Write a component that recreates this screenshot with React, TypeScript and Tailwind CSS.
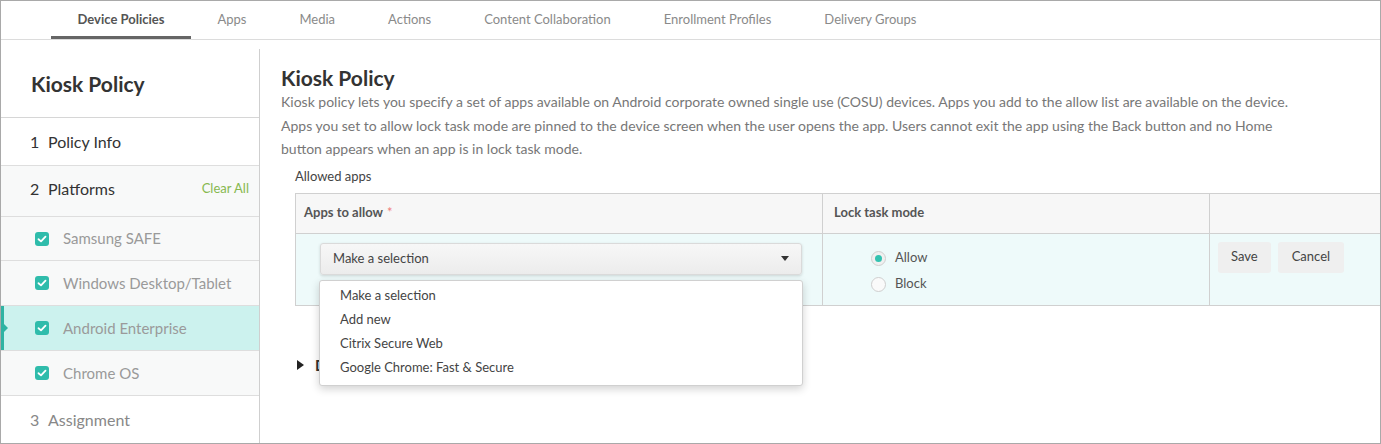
import React from "react";

const tabs = [
  "Device Policies",
  "Apps",
  "Media",
  "Actions",
  "Content Collaboration",
  "Enrollment Profiles",
  "Delivery Groups",
];

function Check() {
  return (
    <span className="w-[14px] h-[14px] rounded-[3px] bg-[#2fbcab] flex items-center justify-center shrink-0">
      <svg width="10" height="8" viewBox="0 0 10 8" fill="none">
        <path d="M1.5 4.2 L4 6.4 L8.5 1.6" stroke="white" strokeWidth="1.8" strokeLinecap="round" strokeLinejoin="round" />
      </svg>
    </span>
  );
}

function SubItem({ label, active }: { label: string; active?: boolean }) {
  return (
    <div
      className={
        "relative h-[45px] border-b border-[#dedede] flex items-center pl-[34px] gap-[14px] " +
        (active ? "bg-[#ccf2ee]" : "bg-[#f8f9f9]")
      }
    >
      {active && (
        <>
          <span className="absolute left-0 top-0 bottom-0 w-[3px] bg-[#2fb3a3]" />
          <span className="absolute left-[3px] top-1/2 -translate-y-1/2 w-0 h-0 border-y-[4px] border-y-transparent border-l-[4px] border-l-[#2fb3a3]" />
        </>
      )}
      <Check />
      <span className="text-[15px] text-[#9a9a9a]">{label}</span>
    </div>
  );
}

export default function App() {
  return (
    <div
      className="w-[1381px] h-[444px] border border-[#a9a9a9] bg-white overflow-hidden flex flex-col text-[#333]"
      style={{ fontFamily: "Lato, 'Liberation Sans', sans-serif" }}
    >
      <nav className="h-[39px] border-b border-[#dcdcdc] flex items-stretch pl-[50px] shrink-0">
        {tabs.map((t, i) => (
          <div
            key={t}
            className={
              "px-[26.5px] flex items-center text-[13px] " +
              (i === 0
                ? "font-bold text-[#555] border-b-[3px] border-[#666] pt-[3px]"
                : "text-[#8a8a8a]")
            }
          >
            {t}
          </div>
        ))}
      </nav>

      <div className="flex flex-1 min-h-0">
        <aside className="w-[259px] shrink-0 mt-[9px] border-r border-[#cfcfcf] flex flex-col">
          <div className="h-[69px] border-b border-[#d6d6d6] flex items-center pl-[30px] pt-[2px]">
            <span className="text-[21px] font-bold text-[#333]">Kiosk Policy</span>
          </div>
          <div className="h-[48px] border-b border-[#dedede] flex items-center pl-[29px] pt-[1px] text-[16px] text-[#333]">
            <span className="w-[18px]">1</span>
            <span>Policy Info</span>
          </div>
          <div className="h-[51px] border-b border-[#dedede] bg-[#f8f9f9] flex items-center pl-[29px] pr-[10px] pb-[3px] text-[16px] text-[#333]">
            <span className="w-[18px]">2</span>
            <span className="flex-1">Platforms</span>
            <span className="text-[13px] text-[#86b84f] -mt-[1px]">Clear All</span>
          </div>
          <SubItem label="Samsung SAFE" />
          <SubItem label="Windows Desktop/Tablet" />
          <SubItem label="Android Enterprise" active />
          <SubItem label="Chrome OS" />
          <div className="h-[47px] flex items-center pl-[29px] text-[16px] text-[#888]">
            <span className="w-[18px]">3</span>
            <span>Assignment</span>
          </div>
        </aside>

        <main className="flex-1 min-w-0 pl-[21px] pt-[26px]">
          <h1 className="text-[21px] leading-[24px] font-bold text-[#333]">Kiosk Policy</h1>
          <div className="text-[14px] leading-[23.5px] text-[#777] whitespace-nowrap">
            <div>
              Kiosk policy lets you specify a set of apps available on Android corporate owned single use (COSU) devices. Apps you add to the allow list are available on the device.
            </div>
            <div>
              Apps you set to allow lock task mode are pinned to the device screen when the user opens the app. Users cannot exit the app using the Back button and no Home
            </div>
            <div>button appears when an app is in lock task mode.</div>
          </div>
          <div className="pl-[14px] mt-[6px] text-[13px] leading-[18px] text-[#444]">Allowed apps</div>

          <div className="relative ml-[14px] mt-[8px] border border-[#d0d0d0] w-[1100px]">
            <div className="flex h-[40px] bg-[#f7f7f7] border-b border-[#d0d0d0] text-[13px] font-bold text-[#555]">
              <div className="w-[527px] border-r border-[#d0d0d0] flex items-center pl-[8px]">
                Apps to allow<span className="text-[#f08080] font-normal ml-[4px]">*</span>
              </div>
              <div className="w-[387px] border-r border-[#d0d0d0] flex items-center pl-[11px]">Lock task mode</div>
              <div className="flex-1" />
            </div>
            <div className="flex h-[71px] bg-[#eefafa]">
              <div className="w-[527px] border-r border-[#d0d0d0] pl-[24px] pt-[9px]">
                <div className="w-[482px] h-[32px] rounded-[3px] border border-[#dadada] bg-gradient-to-b from-[#f7f7f7] to-[#ececec] shadow-[0_1px_3px_rgba(0,0,0,0.15)] flex items-center pl-[12px] pr-[12px] text-[13px] text-[#444]">
                  <span className="flex-1">Make a selection</span>
                  <span className="w-0 h-0 border-x-[4px] border-x-transparent border-t-[5px] border-t-[#333]" />
                </div>
              </div>
              <div className="w-[387px] border-r border-[#d0d0d0] pl-[48px] pt-[17px] flex flex-col gap-[11px] text-[13px] text-[#555]">
                <label className="flex items-center gap-[9px] h-[15px]">
                  <span className="w-[15px] h-[15px] rounded-full border border-[#cfcfcf] bg-[#f0f0f0] flex items-center justify-center">
                    <span className="w-[7px] h-[7px] rounded-full bg-[#33c2b0]" />
                  </span>
                  Allow
                </label>
                <label className="flex items-center gap-[9px] h-[15px]">
                  <span className="w-[15px] h-[15px] rounded-full border border-[#cfcfcf] bg-[#fafafa]" />
                  Block
                </label>
              </div>
              <div className="flex-1 pl-[8px] pt-[8px] flex gap-[7px] items-start text-[13px] text-[#444]">
                <button className="h-[31px] px-[13px] rounded-[3px] bg-[#efefef]">Save</button>
                <button className="h-[31px] px-[14px] rounded-[3px] bg-[#efefef]">Cancel</button>
              </div>
            </div>

            <div className="absolute left-[23px] top-[86px] w-[484px] bg-white border border-[#d0d0d0] rounded-[3px] shadow-[0_3px_8px_rgba(0,0,0,0.18)] pt-[3px] pb-[5px] z-10 text-[13px] text-[#444]">
              {["Make a selection", "Add new", "Citrix Secure Web", "Google Chrome: Fast & Secure"].map((o) => (
                <div key={o} className="h-[24px] flex items-center pl-[20px]">{o}</div>
              ))}
            </div>
          </div>

          <div className="mt-[48px] ml-[16px] flex items-center gap-[11px] text-[15px] font-bold text-[#333]">
            <span className="w-0 h-0 border-y-[5.5px] border-y-transparent border-l-[7px] border-l-[#222]" />
            <span>Deployment Rules</span>
          </div>
        </main>
      </div>
    </div>
  );
}
